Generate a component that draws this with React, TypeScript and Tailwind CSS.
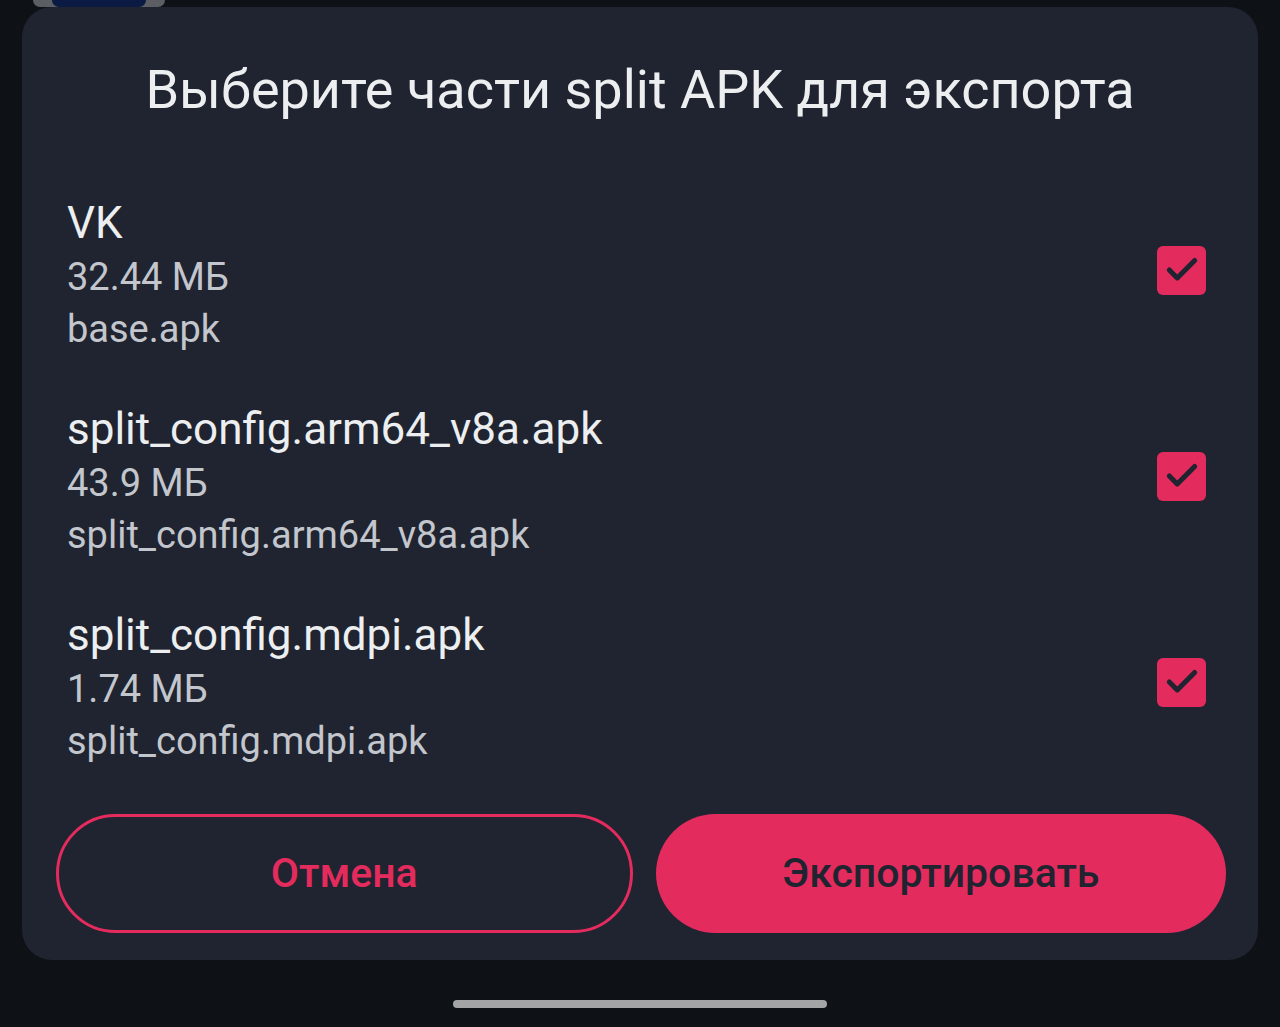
import { Check } from 'lucide-react';

const parts = [
  { title: 'VK', size: '32.44 МБ', file: 'base.apk' },
  { title: 'split_config.arm64_v8a.apk', size: '43.9 МБ', file: 'split_config.arm64_v8a.apk' },
  { title: 'split_config.mdpi.apk', size: '1.74 МБ', file: 'split_config.mdpi.apk' },
];

function Checkbox() {
  return (
    <div className="mb-[10px] flex h-[49px] w-[49px] items-center justify-center rounded-[6px] bg-[#e42b5d]">
      <Check className="h-[38px] w-[38px] text-[#1f2430]" strokeWidth={3.2} />
    </div>
  );
}

export default function App() {
  return (
    <div className="flex min-h-[1027px] w-[1280px] flex-col bg-[#0e1115] font-['Roboto',sans-serif]">
      {/* app icon peeking from behind the sheet */}
      <div className="ml-[33px] flex h-[7px] w-[132px] justify-center rounded-b-[10px] bg-[#5b5f64]">
        <div className="h-[7px] w-[94px] rounded-b-[14px] bg-[#0b1a42]" />
      </div>

      <div className="mx-[22px] flex h-[953px] flex-col rounded-[30px] bg-[#1f2430] px-[45px] pt-[52px] pb-[27px]">
        <h1 className="text-center text-[54px] leading-[62px] text-[#eceef0]">
          Выберите части split APK для экспорта
        </h1>

        <div className="mt-[74px] flex flex-col gap-[46px]">
          {parts.map((p) => (
            <div key={p.title} className="flex items-center justify-between pr-[7px]">
              <div className="flex flex-col">
                <span className="text-[44px] leading-[56px] text-[#eceef0]">{p.title}</span>
                <span className="text-[38px] leading-[52px] text-[#c3c6cc]">{p.size}</span>
                <span className="text-[38px] leading-[52px] text-[#c3c6cc]">{p.file}</span>
              </div>
              <Checkbox />
            </div>
          ))}
        </div>

        <div className="mt-auto -ml-[11px] -mr-[13px] flex gap-[23px]">
          <button
            type="button"
            className="flex h-[119px] flex-1 items-center justify-center rounded-full border-[3px] border-[#e42b5d] text-[41px] font-medium text-[#e42b5d]"
          >
            Отмена
          </button>
          <button
            type="button"
            className="flex h-[119px] flex-1 items-center justify-center rounded-full bg-[#e42b5d] text-[41px] font-medium text-[#1f2430]"
          >
            Экспортировать
          </button>
        </div>
      </div>

      <div className="flex flex-1 items-center justify-center pt-[21px]">
        <div className="h-[8px] w-[374px] rounded-full bg-[#a3a4a6]" />
      </div>
    </div>
  );
}
